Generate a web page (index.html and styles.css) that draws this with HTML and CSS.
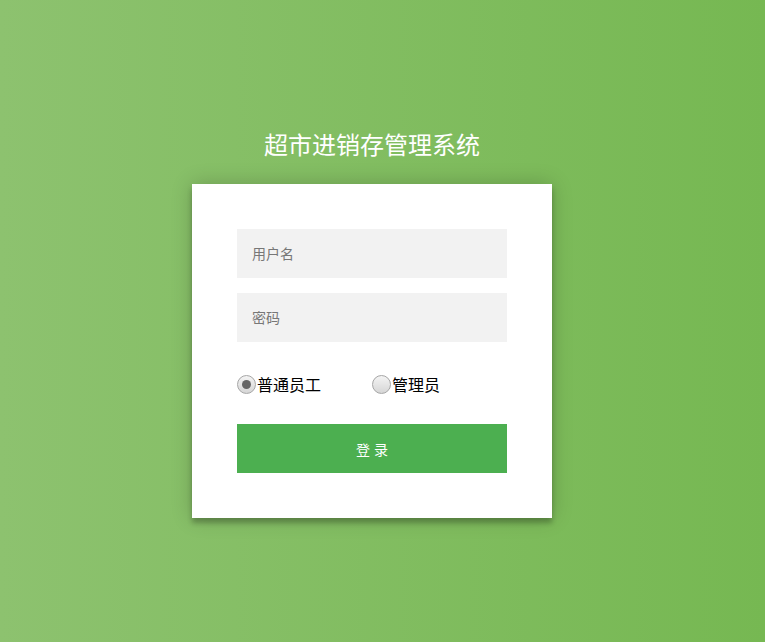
FILE: index.html
```html
<!DOCTYPE html>
<html lang="zh-CN">
<head>
    <meta charset="UTF-8">
    <meta name="viewport" content="width=device-width, initial-scale=1.0">
    <title>超市进销存管理系统</title>
    <link rel="stylesheet" href="styles.css">
</head>
<body>
    <div class="login-page">
        <h2 class="title">超市进销存管理系统</h2>

        <!-- 登录表单 -->
        <form class="form" id="login-form">
            <input type="text" name="username" placeholder="用户名">
            <input type="password" name="password" placeholder="密码">
            <div class="role-row">
                <label class="role"><input type="radio" name="role" value="staff" checked>普通员工</label>
                <label class="role"><input type="radio" name="role" value="admin">管理员</label>
            </div>
            <button type="submit">登 录</button>
        </form>
    </div>
</body>
</html>
```

FILE: styles.css
```css
body {
    margin: 0;
    padding-right: 21px;
    height: 642px;
    font-family: "Liberation Sans", "Noto Sans CJK SC", sans-serif;
    background: linear-gradient(to left, #76b852, #8dc26f);
}

.login-page {
    width: 360px;
    margin: 0 auto;
    padding-top: 129px;
}

.title {
    margin: 0 0 21px;
    font-size: 24px;
    line-height: 34px;
    font-weight: normal;
    color: #fff;
    text-align: center;
}

.form {
    background: #fff;
    padding: 45px;
    box-shadow: 0 0 20px 0 rgba(0, 0, 0, 0.2), 0 5px 5px 0 rgba(0, 0, 0, 0.24);
}

.form input[type="text"],
.form input[type="password"] {
    display: block;
    width: 100%;
    height: 49px;
    box-sizing: border-box;
    margin: 0 0 15px;
    padding: 0 15px;
    border: 0;
    outline: 0;
    background: #f2f2f2;
    font-family: inherit;
    font-size: 14px;
}

.form input[type="password"] {
    margin-bottom: 0;
}

.form input::placeholder {
    color: #777;
}

.role-row {
    display: flex;
    align-items: center;
    height: 82px;
    padding-top: 2px;
    box-sizing: border-box;
}

.role {
    display: flex;
    align-items: center;
    font-size: 16px;
    color: #000;
    margin-right: 51px;
}

.role input {
    -webkit-appearance: none;
    appearance: none;
    width: 19px;
    height: 19px;
    margin: 0 1px 0 0;
    border: 1px solid #a6a6a6;
    border-radius: 50%;
    background: linear-gradient(#f4f4f4, #d6d6d6);
    box-sizing: border-box;
    position: relative;
}

.role input:checked::after {
    content: "";
    position: absolute;
    left: 4px;
    top: 4px;
    width: 9px;
    height: 9px;
    border-radius: 50%;
    background: #666;
}

.form button {
    display: block;
    width: 100%;
    height: 49px;
    border: 0;
    outline: 0;
    background: #4caf50;
    color: #fff;
    font-family: inherit;
    font-size: 14px;
    cursor: pointer;
}
```
